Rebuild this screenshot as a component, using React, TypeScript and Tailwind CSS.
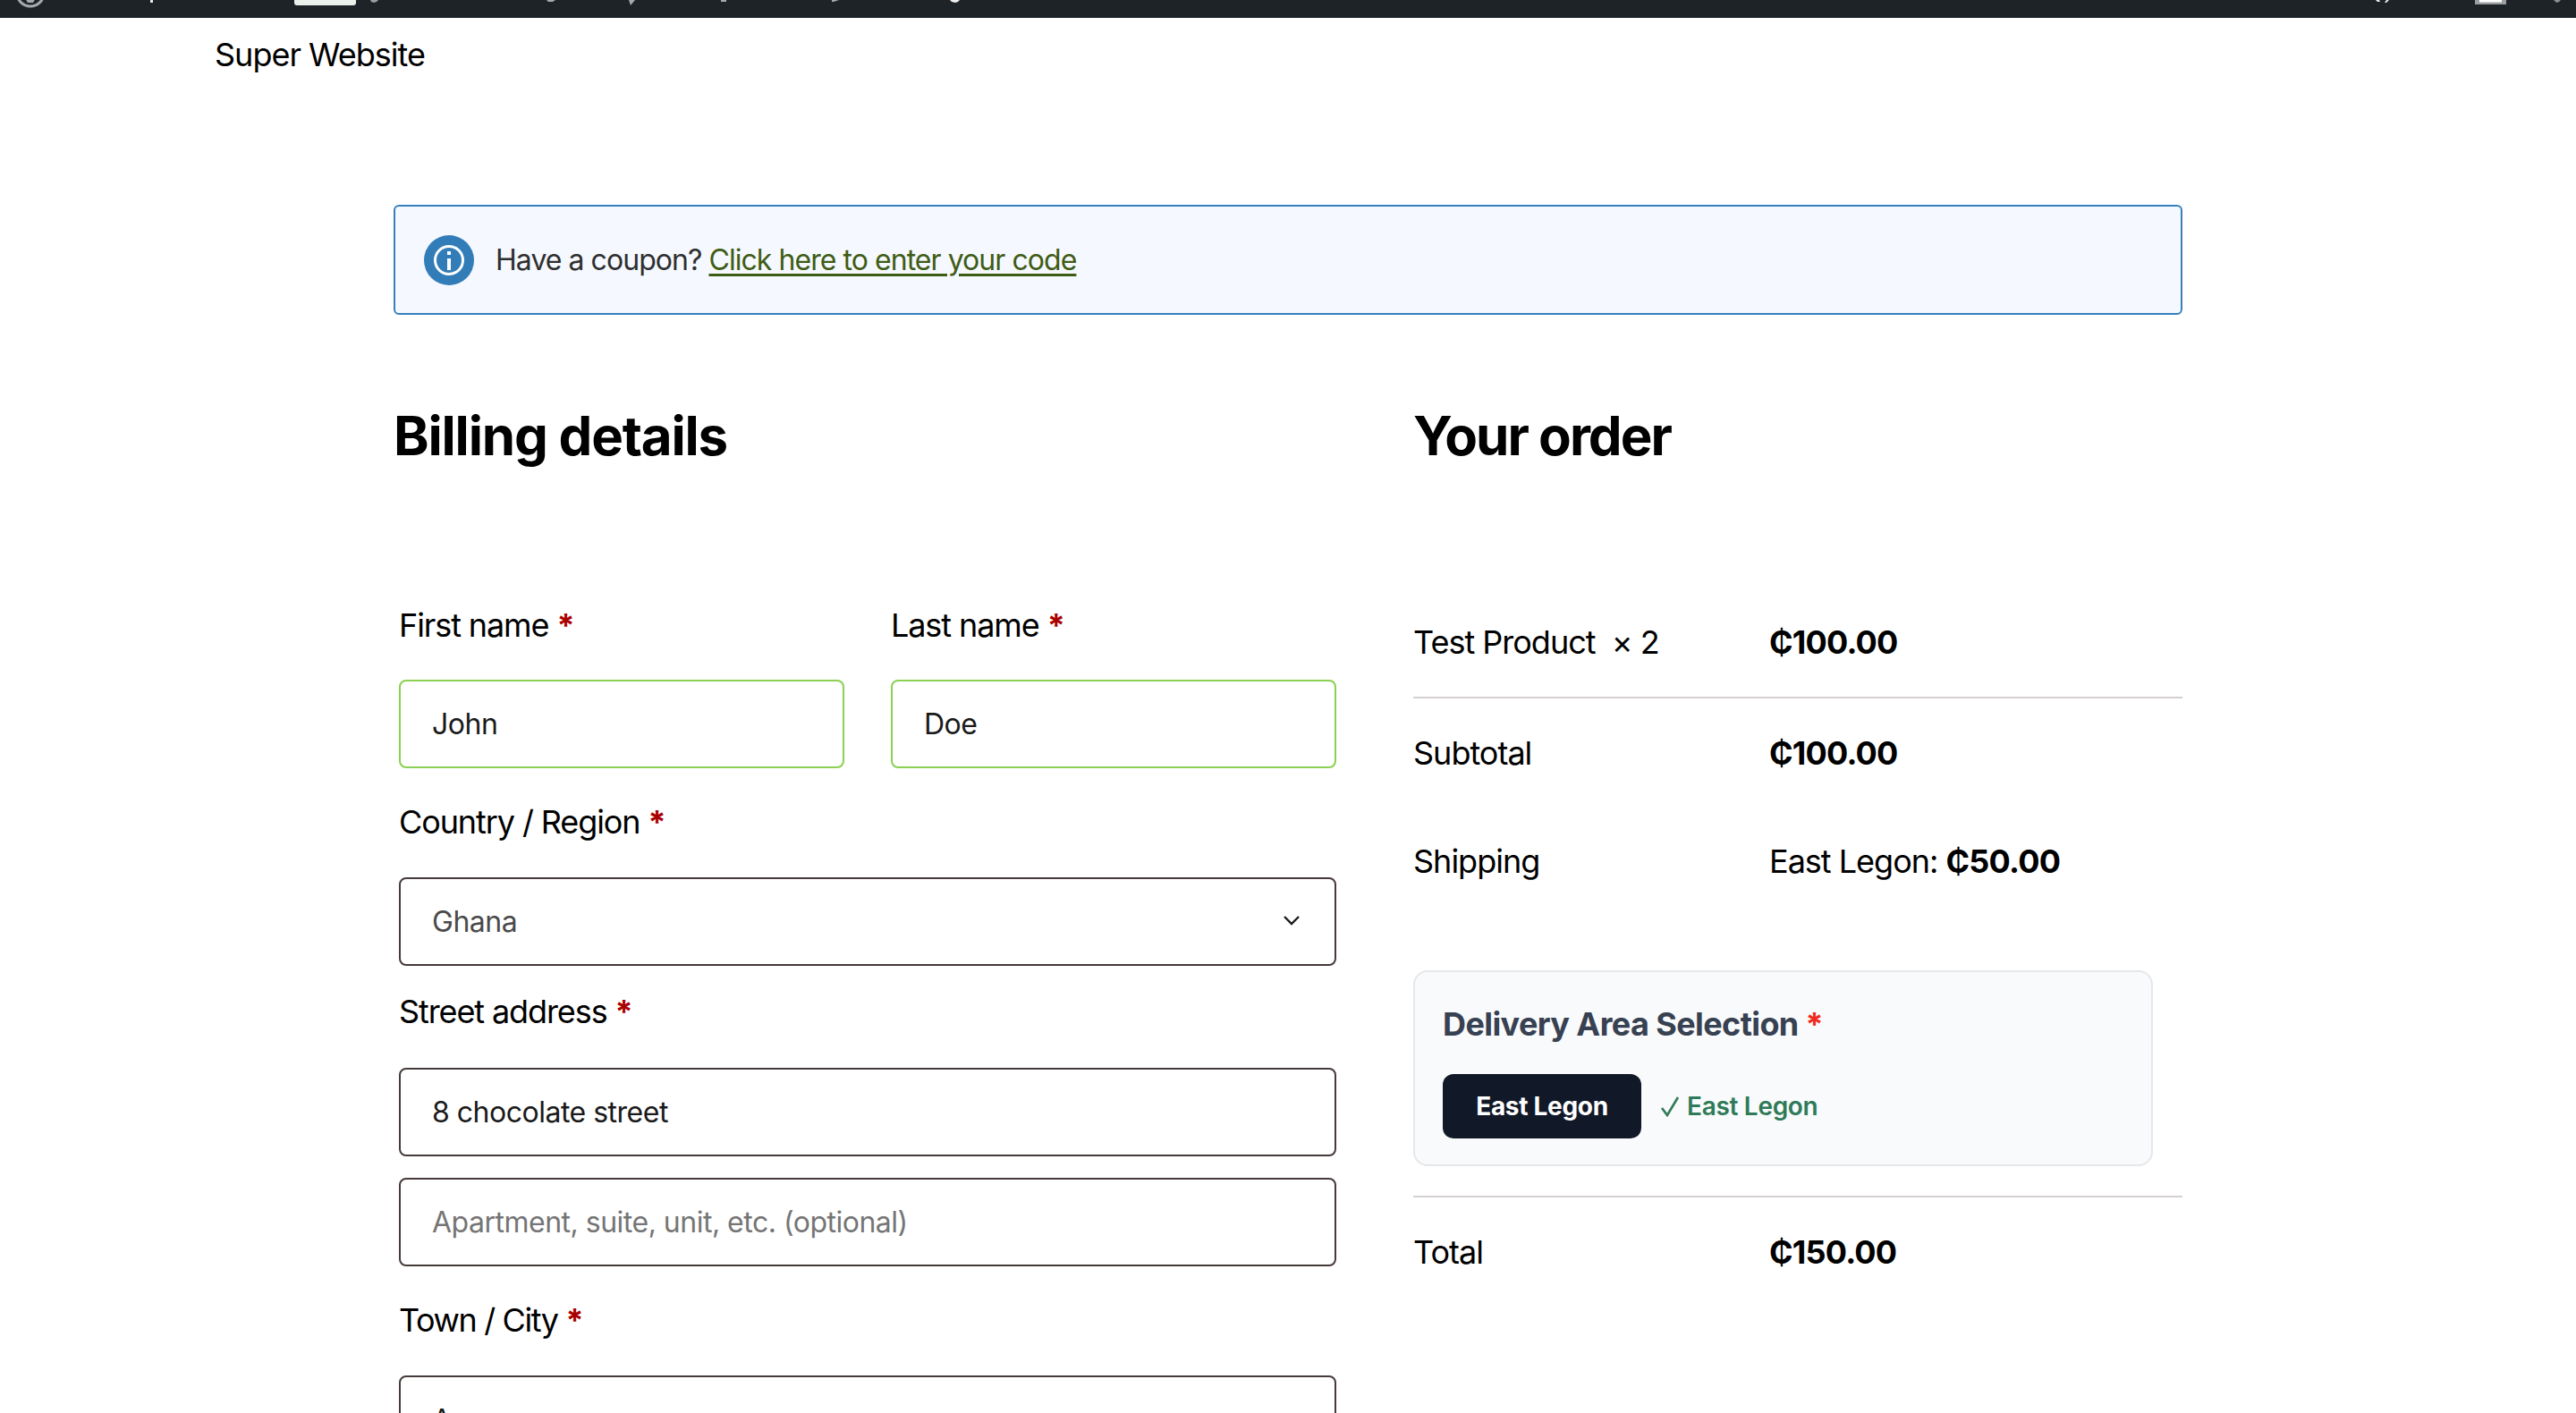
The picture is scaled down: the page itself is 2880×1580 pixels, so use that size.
import React from "react";

const Label = ({ children, tight }: { children: React.ReactNode; tight?: boolean }) => (
  <label className={`block text-[36px] leading-[54px] text-black ${tight ? "tracking-[-1.4px]" : "tracking-[-1.1px]"}`}>
    {children} <span className="font-bold text-[#a00]">*</span>
  </label>
);

const Field = ({ value, ok, tone = "text-[#1a1a1a]" }: { value: string; ok?: boolean; tone?: string }) => (
  <div
    className={`h-[99px] rounded-[8px] border-2 pl-[35px] pr-[36px] pt-[1px] flex items-center text-[32px] tracking-[-0.5px] ${
      ok ? "border-[#8bd052]" : "border-[#463a3a]"
    } ${tone}`}
  >
    {value}
  </div>
);

const Row = ({ a, children, className = "" }: { a: string; children: React.ReactNode; className?: string }) => (
  <div className={`grid grid-cols-[398px_1fr] items-center text-[36px] tracking-[-1px] text-black ${className}`}>
    <div>{a}</div>
    <div>{children}</div>
  </div>
);

const Price = ({ children }: { children: React.ReactNode }) => (
  <b className="tracking-[-0.8px]">{children}</b>
);

export default function App() {
  return (
    <div className="h-[1580px] overflow-hidden bg-white font-['Inter',sans-serif] text-black">
      <div className="h-[20px] bg-[#1d2327] overflow-hidden">
        <svg width="2880" height="20" viewBox="0 0 2880 20" className="block">
          <circle cx="34" cy="-8" r="15" fill="none" stroke="#a7aaad" strokeWidth="3" />
          <path d="M28 -2h12l-3 5h-6z" fill="#a7aaad" />
          <rect x="168" y="0" width="3" height="3" fill="#e8e8e8" />
          <path d="M329 0h69v3a3 3 0 0 1-3 3h-63a3 3 0 0 1-3-3z" fill="#e8f2ea" />
          <path d="M414 0h9l-2 2-3 1-3-1z" fill="#9a9ea1" />
          <path d="M611 0h10l-3 2h-5z" fill="#a7aaad" />
          <path d="M703 0h7l-5 6z" fill="#a7aaad" />
          <rect x="806" y="0" width="6" height="2" fill="#a7aaad" />
          <path d="M930 0h8l-6 2h-2z" fill="#a7aaad" />
          <path d="M1062 0h11l-2 2-3 1-4-1z" fill="#f0f0f0" />
          <path d="M2656 0h4l1 2h-3zM2668 0h3l-3 3h-2z" fill="#e8e8e8" />
          <rect x="2767" y="0" width="35" height="5" fill="#9a9ea1" />
          <rect x="2772" y="0" width="25" height="2.5" fill="#ffffff" />
          <path d="M2855 0h8l-2 2-2 1-2-1z" fill="#8c8f94" />
        </svg>
      </div>
      <div className="pl-[240px] pt-[17px] text-[36px] leading-[48px] tracking-[-1px]">Super Website</div>
      <div className="mx-[440px] mt-[144px] h-[123px] flex items-center rounded-[6px] border-2 border-[#3580bb] bg-[#f5f8ff] pl-[32px] text-[32px] tracking-[-0.95px] text-[#2f2f2f]">
        <svg viewBox="0 0 56 56" className="w-[56px] h-[56px] mr-[24px] shrink-0">
          <circle cx="28" cy="28" r="28" fill="#327db8" />
          <circle cx="28" cy="28" r="15.5" fill="none" stroke="#fff" strokeWidth="3" />
          <rect x="26" y="26" width="4" height="13" fill="#fff" />
          <rect x="26" y="18" width="4" height="4" fill="#fff" />
        </svg>
        <span>
          Have a coupon?{" "}
          <span className="text-[#3f5c14] underline decoration-[3px] underline-offset-[4px]">
            Click here to enter your code
          </span>
        </span>
      </div>
      <div className="mx-[440px] mt-[95px] grid grid-cols-[1140px_860px]">
        <div>
          <h3 className="text-[60px] leading-[80px] font-bold tracking-[-1.2px]">Billing details</h3>
          <div className="mt-[145px] pl-[6px] w-[1054px]">
            <div className="grid grid-cols-2 gap-x-[52px]">
              <div>
                <Label>First name</Label>
                <div className="mt-[34px]"><Field value="John" ok /></div>
              </div>
              <div>
                <Label>Last name</Label>
                <div className="mt-[34px]"><Field value="Doe" ok /></div>
              </div>
            </div>
            <div className="mt-[33px]"><Label>Country / Region</Label></div>
            <div className="relative mt-[35px]">
              <Field value="Ghana" tone="text-[#4a4a4a]" />
              <svg viewBox="0 0 20 12" className="absolute left-[988px] top-[42px] w-[20px] h-[12px]" fill="none" stroke="#1a1a1a" strokeWidth="2.4">
                <path d="M2 2l8 8 8-8" />
              </svg>
            </div>
            <div className="mt-[24px]"><Label>Street address</Label></div>
            <div className="mt-[36px]"><Field value="8 chocolate street" /></div>
            <div className="mt-[24px]"><Field value="Apartment, suite, unit, etc. (optional)" tone="text-[#757575]" /></div>
            <div className="mt-[33px]"><Label tight>Town / City</Label></div>
            <div className="mt-[35px]"><Field value="Accra" /></div>
          </div>
        </div>
        <div>
          <h3 className="text-[60px] leading-[80px] font-bold tracking-[-2px]">Your order</h3>
          <div className="mt-[130px]">
            <Row a="Test Product  × 2" className="h-[122px] whitespace-pre">
              <Price>₵100.00</Price>
            </Row>
            <div className="border-t-2 border-[#d4cfd1]" />
            <Row a="Subtotal" className="h-[122px]">
              <Price>₵100.00</Price>
            </Row>
            <Row a="Shipping" className="h-[120px]">
              East Legon: <Price>₵50.00</Price>
            </Row>
            <div className="mt-[62px] w-[827px] h-[219px] rounded-[16px] border-2 border-[#e5e7eb] bg-[#f9fafb] pl-[31px] pt-[28px]">
              <div className="text-[36px] leading-[60px] font-bold tracking-[-0.6px] text-[#374151]">
                Delivery Area Selection <span className="text-[#ef2b1d]">*</span>
              </div>
              <div className="mt-[26px] flex items-center">
                <div className="w-[222px] h-[72px] rounded-[12px] bg-[#111827] flex items-center justify-center text-[28px] font-bold tracking-[-0.3px] text-white">
                  East Legon
                </div>
                <div className="ml-[21px] flex items-center text-[28px] font-semibold tracking-[-0.3px] text-[#2f7a58]">
                  <svg viewBox="0 0 22 24" className="w-[22px] h-[24px] mr-[8px]" fill="none" stroke="#2f7a58" strokeWidth="2.6">
                    <path d="M2 14l6 8L20 2" />
                  </svg>
                  East Legon
                </div>
              </div>
            </div>
            <div className="mt-[33px] border-t-2 border-[#d4cfd1]" />
            <Row a="Total" className="h-[122px]">
              <Price>₵150.00</Price>
            </Row>
          </div>
        </div>
      </div>
    </div>
  );
}
